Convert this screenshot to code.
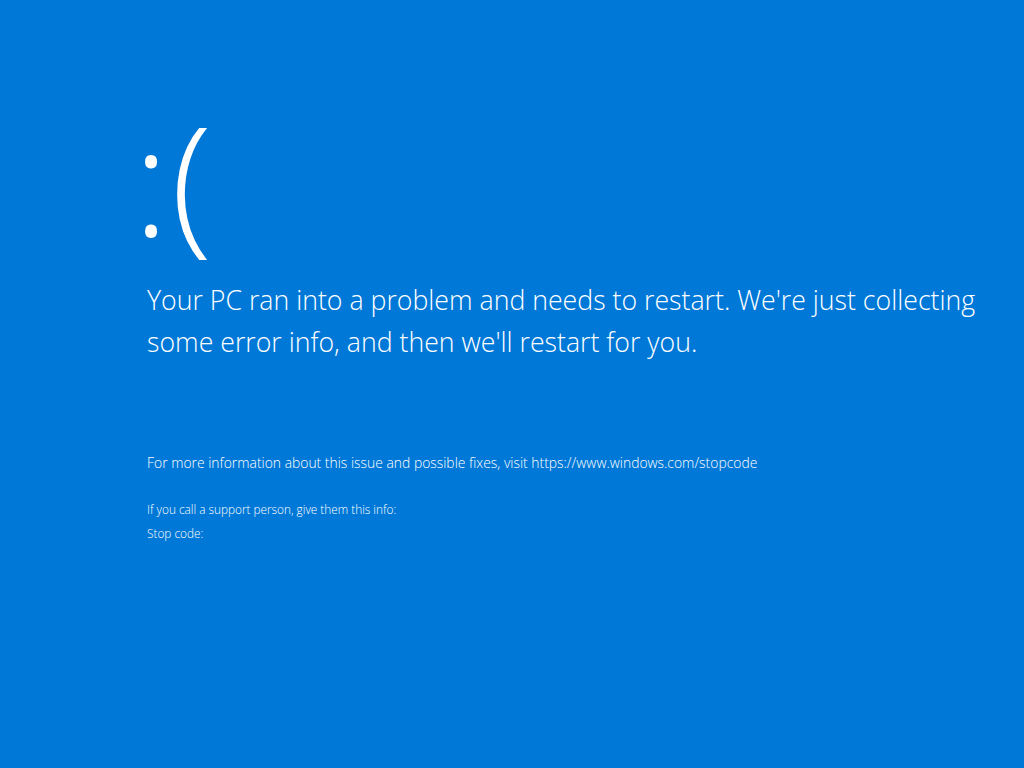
export default function App() {
  return (
    <div className="w-[1024px] h-[768px] bg-[#0078d7] text-white overflow-hidden" style={{ fontFamily: '"Open Sans", "Noto Sans", sans-serif' }}>
      <div className="pl-[133px] pt-[73px]">
        <div className="text-[151px] leading-[210px] font-light tracking-[2px]">:(</div>
        <div className="pl-[14px] mt-[-4px] text-[26.7px] leading-[42px] font-light w-[880px]">
          Your PC ran into a problem and needs to restart. We're just collecting some error info, and then we'll restart for you.
        </div>
        <div className="pl-[14px] mt-[90px] text-[13.9px] leading-[20px] font-light">
          For more information about this issue and possible fixes, visit https://www.windows.com/stopcode
        </div>
        <div className="pl-[14px] mt-[24px] text-[11.8px] leading-[24px] font-light">
          <div>If you call a support person, give them this info:</div>
          <div>Stop code:</div>
        </div>
      </div>
    </div>
  );
}
